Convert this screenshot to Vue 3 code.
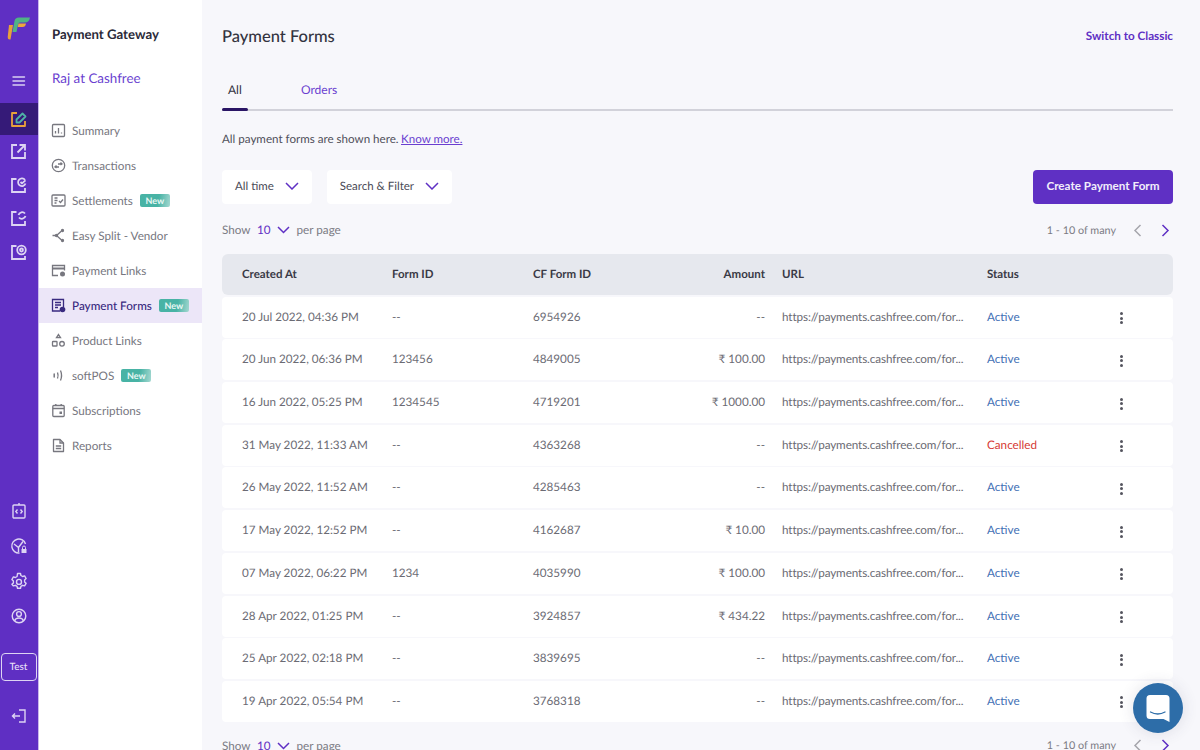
<script setup>
const nav = [
  { label: 'Summary', icon: 'summary' },
  { label: 'Transactions', icon: 'transactions' },
  { label: 'Settlements', icon: 'settlements', isNew: true },
  { label: 'Easy Split - Vendor', icon: 'split' },
  { label: 'Payment Links', icon: 'links' },
  { label: 'Payment Forms', icon: 'forms', isNew: true, active: true },
  { label: 'Product Links', icon: 'product' },
  { label: 'softPOS', icon: 'pos', isNew: true },
  { label: 'Subscriptions', icon: 'subs' },
  { label: 'Reports', icon: 'reports' },
]
const rows = [
  ['20 Jul 2022, 04:36 PM', '--', '6954926', '--', 'Active'],
  ['20 Jun 2022, 06:36 PM', '123456', '4849005', '₹ 100.00', 'Active'],
  ['16 Jun 2022, 05:25 PM', '1234545', '4719201', '₹ 1000.00', 'Active'],
  ['31 May 2022, 11:33 AM', '--', '4363268', '--', 'Cancelled'],
  ['26 May 2022, 11:52 AM', '--', '4285463', '--', 'Active'],
  ['17 May 2022, 12:52 PM', '--', '4162687', '₹ 10.00', 'Active'],
  ['07 May 2022, 06:22 PM', '1234', '4035990', '₹ 100.00', 'Active'],
  ['28 Apr 2022, 01:25 PM', '--', '3924857', '₹ 434.22', 'Active'],
  ['25 Apr 2022, 02:18 PM', '--', '3839695', '--', 'Active'],
  ['19 Apr 2022, 05:54 PM', '--', '3768318', '--', 'Active'],
]
</script>

<template>
  <div class="app">
    <aside class="rail">
      <svg class="logo" width="24" height="24" viewBox="0 0 24 24" fill="none">
        <path d="M5.500 15 L7.500 4 Q8 0.500 12 0.500 L23 0.500 Q22 5.500 18 5.500 L13 5.500 Q11.500 5.500 11.200 7 L9.500 15 Z" fill="#4fb286" />
        <path d="M2 8 H6 L3.500 22.500 Q0.500 23 0.700 20 Z" fill="#e8a03a" />
        <path d="M11.500 6.500 H19 Q18.500 10 15.500 10 H10.800 Z" fill="#eda93c" />
      </svg>
      <svg class="ham" width="14" height="12" viewBox="0 0 14 12"><path d="M1 2h11.500M1 6h11.500M1 10h11.500" stroke="#d9cff2" stroke-width="1.400" stroke-linecap="round"/></svg>
      <div class="rail-active">
        <svg width="20" height="20" viewBox="0 0 20 20" fill="none">
          <path d="M8 4H3v13h13v-5" stroke="#e9a23b" stroke-width="1.800" stroke-linejoin="round"/>
          <path d="M7.500 10.500 13.500 4.500l3 3-6 6h-3z" stroke="#4fb2a6" stroke-width="1.800" stroke-linejoin="round"/>
        </svg>
      </div>
      <div class="rail-icons">
        <svg width="20" height="20" viewBox="0 0 20 20" fill="none" stroke="#ddd4f3" stroke-width="1.800"><path d="M8 4H3v13h13v-6"/><path d="M8.500 11.500 15 5M10.500 4h5.500v5.500"/></svg>
        <svg width="20" height="20" viewBox="0 0 20 20" fill="none" stroke="#ddd4f3" stroke-width="1.800"><path d="M7.500 4H3v13h13v-4"/><path d="M16 5a3.800 3.800 0 1 0 .5 3.500"/><path d="M11.500 7l1.500 1.400 3.500-3"/></svg>
        <svg width="20" height="20" viewBox="0 0 20 20" fill="none" stroke="#ddd4f3" stroke-width="1.800"><path d="M7.500 4H3v13h13v-4"/><path d="M9.500 7a3.800 3.800 0 0 1 6.500-1.500M16.500 8a3.800 3.800 0 0 1-6.500 1.500"/></svg>
        <svg width="20" height="20" viewBox="0 0 20 20" fill="none" stroke="#ddd4f3" stroke-width="1.800"><path d="M7.500 4H3v13h13v-3"/><circle cx="12.500" cy="8" r="4.300"/><circle cx="12.500" cy="8" r="1.500"/></svg>
      </div>
      <div class="rail-bottom">
        <svg width="16" height="18" viewBox="0 0 16 18" fill="none" stroke="#ddd4f3" stroke-width="1.400"><rect x="2" y="3" width="12" height="13" rx="1"/><path d="M8 1v2M6.500 7.500 4.800 9.500l1.700 2M9.500 7.500l1.700 2-1.700 2"/></svg>
        <svg width="18" height="18" viewBox="0 0 18 18" fill="none" stroke="#ddd4f3" stroke-width="1.400"><path d="M15.500 7A7 7 0 1 0 9.500 16"/><path d="M4 7l4.500 3.500L13 4.500M8.500 10.500V15"/><rect x="11.500" y="12" width="5" height="4" fill="#ddd4f3" stroke="none"/><path d="M12.500 12v-1.500a1.500 1.500 0 0 1 3 0V12" stroke-width="1"/></svg>
        <svg width="18" height="18" viewBox="0 0 18 18" fill="none" stroke="#ddd4f3" stroke-width="1.400"><path d="M7.500 1.500h3l.4 2 1.700 1 2-.6 1.500 2.600-1.500 1.400v2l1.500 1.400-1.500 2.600-2-.6-1.700 1-.4 2h-3l-.4-2-1.700-1-2 .6L1.900 12.300l1.500-1.400v-2L1.900 7.500l1.500-2.600 2 .6 1.700-1z" stroke-linejoin="round"/><circle cx="9" cy="9.900" r="2.500"/></svg>
        <svg width="18" height="18" viewBox="0 0 18 18" fill="none" stroke="#ddd4f3" stroke-width="1.400"><circle cx="9" cy="9" r="6.800"/><circle cx="9" cy="7" r="2.400"/><path d="M4.500 14c.6-2.200 2.200-3 4.500-3s3.900.8 4.500 3"/></svg>
      </div>
      <div class="test">Test</div>
      <svg class="logout" width="16" height="16" viewBox="0 0 16 16" fill="none" stroke="#ddd4f3" stroke-width="1.400"><path d="M8 2h6v12H8M1.500 8H9M4 5.500 1.500 8 4 10.500"/></svg>
    </aside>

    <nav class="side">
      <h2 class="side-title">Payment Gateway</h2>
      <div class="merchant">Raj at Cashfree</div>
      <ul class="nav-list">
        <li v-for="item in nav" :key="item.label" class="nav-item" :class="{ active: item.active }">
          <svg class="nav-icon" width="15" height="15" viewBox="0 0 15 15" fill="none" stroke="currentColor" stroke-width="1.300">
            <template v-if="item.icon === 'summary'"><rect x="1.500" y="1.500" width="12" height="12" rx="1"/><path d="M4.500 10.500V8M7.500 10.500V5M10.500 10.500V9.500"/></template>
            <template v-else-if="item.icon === 'transactions'"><circle cx="7.500" cy="7.500" r="6.200"/><path d="M4 9h4M5.500 7.500 4 9l1.500 1M11 6H7M9.500 4.500 11 6 9.500 7"/></template>
            <template v-else-if="item.icon === 'settlements'"><rect x="1" y="2" width="13" height="11" rx="1"/><path d="M3.500 5h3M3.500 7.500h3M3.500 10h2M8 8l1.500 1.500L12 6.500"/></template>
            <template v-else-if="item.icon === 'split'"><path d="M1.500 7.500h4l5-4.500M5.500 7.500l5 4.500"/><circle cx="11.500" cy="2.500" r="1" fill="currentColor"/><circle cx="11.500" cy="12.500" r="1" fill="currentColor"/><circle cx="5.500" cy="7.500" r="1" fill="currentColor"/></template>
            <template v-else-if="item.icon === 'links'"><path d="M7 12.500H1.500v-10h12v5"/><path d="M1.500 5.500h12" stroke-width="2"/><circle cx="11.500" cy="11" r="2.500" fill="currentColor" stroke="none"/></template>
            <template v-else-if="item.icon === 'forms'"><path d="M9 13H1.500V1.500h11V9"/><path d="M4 4.500h6M4 7h6M4 9.500h3"/><circle cx="11.500" cy="11.500" r="2.800" fill="currentColor" stroke="none"/></template>
            <template v-else-if="item.icon === 'product'"><path d="M7.500 1.500l2 3h-4z"/><rect x="1.500" y="8.500" width="4.500" height="4.500" rx=".6"/><circle cx="11" cy="10.800" r="2.300"/></template>
            <template v-else-if="item.icon === 'pos'"><path d="M3.200 6v3" stroke-linecap="round" stroke-width="1.500"/><path d="M6.500 4.500c.8 2 .8 4 0 6M9.500 2.500c1.400 3.300 1.400 6.700 0 10" stroke-width="1.300"/></template>
            <template v-else-if="item.icon === 'subs'"><rect x="1.800" y="2.500" width="11.400" height="11" rx="1"/><path d="M1.800 5.500h11.400M4.800 1v2M10.200 1v2" stroke-width="1.400"/><rect x="8.500" y="8.500" width="2.500" height="2.500" fill="currentColor" stroke="none"/></template>
            <template v-else><path d="M2.500 1.500h6.500l3.500 3.500v8.500h-10z" stroke-linejoin="round"/><path d="M9 1.500V5h3.500M4.800 8h5.400M4.800 10.500h5.400"/></template>
          </svg>
          <span class="nav-label">{{ item.label }}</span>
          <span v-if="item.isNew" class="badge">New</span>
        </li>
      </ul>
    </nav>

    <main class="main">
      <header class="top">
        <h1>Payment Forms</h1>
        <a class="classic">Switch to Classic</a>
      </header>

      <div class="tabs">
        <span class="tab on">All</span>
        <span class="tab">Orders</span>
      </div>

      <p class="note">All payment forms are shown here.<a>Know more.</a></p>

      <div class="filters">
        <div class="select">All time
          <svg width="14" height="8" viewBox="0 0 14 8" fill="none"><path d="M1 1l6 6 6-6" stroke="#5f30c4" stroke-width="1.500"/></svg>
        </div>
        <div class="select">Search &amp; Filter
          <svg width="14" height="8" viewBox="0 0 14 8" fill="none"><path d="M1 1l6 6 6-6" stroke="#5f30c4" stroke-width="1.500"/></svg>
        </div>
        <button class="create">Create Payment Form</button>
      </div>

      <div class="pager">
        <span>Show</span>
        <b class="num">10</b>
        <svg class="chev" width="13" height="8" viewBox="0 0 13 8" fill="none"><path d="M1 1l5.500 5.500L12 1" stroke="#5f30c4" stroke-width="1.500"/></svg>
        <span>per page</span>
        <span class="count">1 - 10 of many</span>
        <svg class="arrow" width="9" height="13" viewBox="0 0 9 13" fill="none"><path d="M7.500 1 2 6.500 7.500 12" stroke="#a5a5ac" stroke-width="1.500"/></svg>
        <svg class="arrow next" width="9" height="13" viewBox="0 0 9 13" fill="none"><path d="M1.500 1 7 6.500 1.500 12" stroke="#5f30c4" stroke-width="1.500"/></svg>
      </div>

      <div class="table">
        <div class="row head">
          <span>Created At</span><span>Form ID</span><span>CF Form ID</span>
          <span class="right">Amount</span><span>URL</span><span>Status</span><span></span>
        </div>
        <div v-for="r in rows" :key="r[2]" class="row">
          <span>{{ r[0] }}</span><span>{{ r[1] }}</span><span>{{ r[2] }}</span>
          <span class="right">{{ r[3] }}</span>
          <span class="url">https://payments.cashfree.com/for...</span>
          <span :class="r[4] === 'Active' ? 'active-st' : 'cancel-st'">{{ r[4] }}</span>
          <span class="dots"><i></i><i></i><i></i></span>
        </div>
      </div>

      <div class="pager bottom">
        <span>Show</span>
        <b class="num">10</b>
        <svg class="chev" width="13" height="8" viewBox="0 0 13 8" fill="none"><path d="M1 1l5.500 5.500L12 1" stroke="#5f30c4" stroke-width="1.500"/></svg>
        <span>per page</span>
        <span class="count">1 - 10 of many</span>
        <svg class="arrow" width="9" height="13" viewBox="0 0 9 13" fill="none"><path d="M7.500 1 2 6.500 7.500 12" stroke="#a5a5ac" stroke-width="1.500"/></svg>
        <svg class="arrow next" width="9" height="13" viewBox="0 0 9 13" fill="none"><path d="M1.500 1 7 6.500 1.500 12" stroke="#5f30c4" stroke-width="1.500"/></svg>
      </div>
    </main>

    <div class="chat">
      <svg width="24" height="27" viewBox="0 0 24 27" fill="none">
        <path d="M4 0h16a3.500 3.500 0 0 1 3.500 3.500V27l-6-3H4a3.500 3.500 0 0 1-3.500-3.500v-17A3.500 3.500 0 0 1 4 0z" fill="#fff"/>
        <path d="M4.500 17c4.500 2.500 10 2.500 14.500 0" stroke="#2d6da8" stroke-width="1.300" stroke-linecap="round"/>
      </svg>
    </div>
  </div>
</template>

<style>
html, body { margin: 0; height: 100%; overflow: hidden; }
</style>

<style scoped>
* { box-sizing: border-box; }
.app {
  display: flex; width: 1200px; height: 750px; overflow: hidden; position: relative;
  font-family: "Lato", "Liberation Sans", sans-serif; font-size: 12px; color: #5d5d68; background: #f7f7fb;
  text-rendering: geometricPrecision;
}
.rail {
  width: 39px; flex: none; background: #5f2fc3; border-right: 1px solid #c9b8ec;
  display: flex; flex-direction: column; align-items: center; height: 750px;
}
.logo { margin-top: 17px; flex: none; }
.ham { margin-top: 34px; flex: none; }
.rail-active {
  margin-top: 16px; width: 38px; height: 32px; background: #351a78; display: flex;
  align-items: center; justify-content: center; align-self: flex-start;
}
.rail-icons { display: flex; flex-direction: column; gap: 13.500px; margin-top: 6px; }
.rail-bottom { display: flex; flex-direction: column; align-items: center; gap: 17px; margin-top: 240px; }
.test {
  margin-top: 28px; width: 36px; height: 28px; border: 1px solid #ddd4f3; border-radius: 4px;
  color: #e6dff7; font-size: 10px; font-weight: 500; display: flex; align-items: center; justify-content: center;
  flex: none; margin-left: -1px;
}
.logout { margin-top: 27px; flex: none; }

.side { width: 163px; flex: none; background: #fff; height: 750px; }
.side-title { margin: 26px 0 0 13px; font-size: 13.200px; line-height: 17px; font-weight: 700; color: #2a2a38; }
.merchant { margin: 26px 0 0 13px; font-size: 13.400px; line-height: 18px; color: #6a3fd0; }
.nav-list { list-style: none; margin: 26px 0 0; padding: 0; }
.nav-item { height: 35px; display: flex; align-items: center; padding-left: 12px; color: #77777f; }
.nav-item.active { background: #ece6f8; color: #392a80; font-weight: 500; }
.nav-icon { flex: none; margin-right: 6px; }
.nav-label { white-space: nowrap; font-size: 11.700px; }
.badge {
  margin-left: 7px; height: 13px; width: 30px; border-radius: 2px; font-size: 9px; font-weight: 700; color: #e8f7f4;
  background: linear-gradient(100deg, #48b3a5 60%, #a5d8d1); display: flex; align-items: center; justify-content: center;
}

.main { flex: 1; min-width: 0; padding: 0 27px 0 20px; }
.top { display: flex; justify-content: space-between; align-items: center; height: 72px; }
.top h1 { margin: 0; font-size: 16.500px; font-weight: 500; color: #33333f; }
.classic { font-size: 11.700px; font-weight: 700; color: #5f30c4; margin-bottom: 1px; }
.tabs { display: flex; height: 39px; border-bottom: 2px solid #d2d2da; position: relative; }
.tab { line-height: 36px; color: #6a3fd0; font-size: 12px; margin-left: 60px; }
.tab.on { color: #33333f; margin-left: 6px; position: relative; width: 13px; }
.tab.on::after {
  content: ""; position: absolute; left: -6px; width: 26px; bottom: -2px; height: 3px;
  background: #2a1565; border-radius: 2px;
}
.note { margin: 0; height: 20px; margin-top: 19px; line-height: 20px; color: #4f4f5a; font-size: 11.600px; }
.note a { color: #6a3fd0; text-decoration: underline; margin-left: 2.500px; }
.filters { display: flex; gap: 15px; margin-top: 20px; align-items: center; }
.select {
  height: 34px; background: #fff; border-radius: 4px; padding: 0 13px 2px; display: flex; align-items: center;
  gap: 11px; color: #4a4a56; font-size: 11.500px;
}
.create {
  margin-left: auto; width: 140px; height: 34px; border: 0; border-radius: 4px; background: #5f30c4; padding-bottom: 6px;
  color: #f2eefb; font: 700 11.700px "Lato", "Liberation Sans", sans-serif;
}
.pager { display: flex; align-items: center; height: 18px; margin-top: 17px; color: #7b7b84; font-size: 11.700px; }
.num { font-weight: 400; color: #5f30c4; margin-left: 6.500px; }
.chev { margin: 0 7px 0 6px; }
.count { margin-left: auto; margin-right: 17px; font-size: 10.800px; }
.arrow.next { margin-left: 19px; margin-right: 3px; }
.table { margin-top: 15px; display: flex; flex-direction: column; gap: 1.700px; }
.row {
  display: grid; grid-template-columns: 150px 141px 130px 102px 205px 148px 1fr;
  align-items: center; height: 41px; background: #fff; border-radius: 4px; padding-left: 20px; padding-bottom: 1px; color: #6b6b74; font-size: 11.700px;
}
.row.head { background: #e6e8ee; color: #3a3a46; font-weight: 700; font-size: 11.500px; border-radius: 6px; padding-bottom: 0; }
.row > span { white-space: nowrap; }
.right { text-align: right; }
.row > span:nth-child(5) { padding-left: 17px; }
.row > span:nth-child(6) { padding-left: 17px; }
.url { letter-spacing: -0.1px; }
.active-st { color: #3f70b5; }
.cancel-st { color: #d63a34; }
.dots { display: flex; flex-direction: column; gap: 1.500px; padding-left: 2px; margin-top: 3px; }
.dots i { width: 3px; height: 3px; border-radius: 50%; background: #55555f; display: block; }
.pager.bottom { margin-top: 15px; }
.chat {
  position: absolute; left: 1133px; top: 683px; width: 50px; height: 50px; border-radius: 50%; background: #2d6da8;
  display: flex; align-items: center; justify-content: center; box-shadow: 0 0 16px rgba(60,60,90,.14);
}
</style>
